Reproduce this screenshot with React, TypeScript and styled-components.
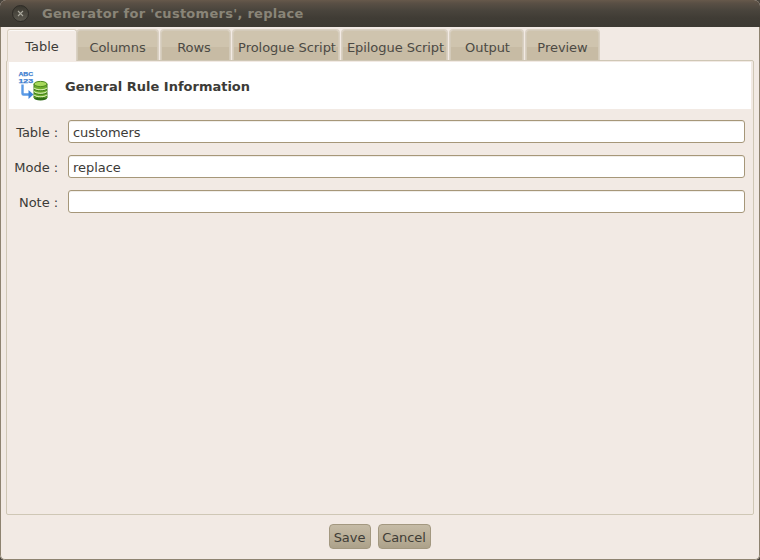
import React from "react";
import styled, { createGlobalStyle } from "styled-components";

const Global = createGlobalStyle`
  html, body { margin: 0; padding: 0; width: 760px; height: 560px; overflow: hidden; background: #4a453d; }
  #root { width: 760px; height: 560px; }
  * { box-sizing: border-box; }
`;

const Win = styled.div`
  width: 760px;
  height: 560px;
  display: flex;
  flex-direction: column;
  background: #f2eae4;
  border-radius: 6px 6px 5px 5px;
  overflow: hidden;
  font-family: "DejaVu Sans", sans-serif;
  font-size: 13px;
  letter-spacing: -0.05px;
  color: #3c3b37;
`;

const TitleBar = styled.div`
  height: 27px;
  flex: none;
  display: flex;
  align-items: center;
  gap: 13px;
  padding: 0 0 1px 12px;
  background: linear-gradient(#67594b 0, #5a5045 3px, #4a453d 10px, #403c35 18px, #3d3a33 100%);
`;

const CloseBtn = styled.div`
  width: 17px;
  height: 17px;
  margin-top: 1px;
  border-radius: 50%;
  display: flex;
  align-items: center;
  justify-content: center;
  background: linear-gradient(#3a372f, #5c5950);
  border: 1px solid #2d2b26;
`;

const Title = styled.div`
  font-weight: 700;
  font-size: 13px;
  letter-spacing: 0.27px;
  color: #8a8578;
`;

const Body = styled.div`
  flex: 1;
  display: flex;
  flex-direction: column;
  padding: 2px 6px 0 5px;
  border-left: 1px solid #8e8370;
  border-right: 1px solid #8e8370;
  border-bottom: 1px solid #8e8370;
  border-radius: 0 0 5px 5px;
`;

const TabStrip = styled.div`
  display: flex;
  align-items: flex-end;
  gap: 3px;
  height: 31px;
  flex: none;
  padding-left: 1px;
  position: relative;
  z-index: 1;
`;

const Tab = styled.div<{ $w: number; $active?: boolean; $shift?: number }>`
  width: ${(p) => p.$w}px;
  flex: none;
  height: ${(p) => (p.$active ? 32 : 30)}px;
  margin-bottom: ${(p) => (p.$active ? -1 : 0)}px;
  margin-right: ${(p) => (p.$active ? -3 : 0)}px;
  display: flex;
  align-items: center;
  justify-content: center;
  padding-top: ${(p) => (p.$active ? 2 : 4)}px;
  padding-left: ${(p) => Math.max(p.$shift ?? 0, 0)}px;
  padding-right: ${(p) => Math.max(-(p.$shift ?? 0), 0)}px;
  border-radius: 3px 3px 0 0;
  border: 1px solid ${(p) => (p.$active ? "#d8cfc0" : "#d3cab9")};
  border-bottom: none;
  box-shadow: ${(p) => (p.$active ? "inset 0 1px 0 #fbf8f5" : "0 0 0 1px #dad1c3")};
  clip-path: ${(p) => (p.$active ? "none" : "inset(-1px -1px 0 -1px)")};
  background: ${(p) =>
    p.$active
      ? "#f2eae4"
      : "linear-gradient(#cfc4ae 0, #cfc4ae 55%, #c7bba4 55%, #c7bba4 100%)"};
  color: ${(p) => (p.$active ? "#3c3b37" : "#4c4a44")};
  font-size: 13px;
  white-space: nowrap;
`;

const Panel = styled.div`
  flex: 1;
  display: flex;
  flex-direction: column;
  margin-right: -1px;
  border: 1px solid #cfc7b5;
  border-radius: 2px;
  padding: 1px 2px 0;
`;

const Banner = styled.div`
  height: 47px;
  flex: none;
  display: flex;
  align-items: center;
  gap: 15px;
  padding: 0 0 0 9px;
  background: #fff;
  margin-bottom: 11px;
`;

const BannerTitle = styled.div`
  font-weight: 700;
  font-size: 13px;
  letter-spacing: 0;
  padding-top: 2px;
  color: #3c3b37;
`;

const Form = styled.div`
  display: flex;
  flex-direction: column;
  gap: 12px;
`;

const Row = styled.div`
  display: flex;
  align-items: center;
  padding-right: 6px;
`;

const Label = styled.div`
  width: 49px;
  flex: none;
  text-align: right;
  white-space: nowrap;
  margin-right: 10px;
  padding-top: 2px;
`;

const Field = styled.div`
  flex: 1;
  height: 23px;
  display: flex;
  align-items: center;
  padding: 2px 4px 0;
  background: #fff;
  border: 1px solid #a69779;
  border-radius: 3px;
  box-shadow: inset 0 1px 0 #f1eeea;
  color: #3c3b37;
`;

const Footer = styled.div`
  height: 44px;
  flex: none;
  display: flex;
  justify-content: center;
  align-items: flex-start;
  gap: 7px;
  padding-top: 9px;
`;

const Button = styled.div<{ $w: number }>`
  width: ${(p) => p.$w}px;
  height: 25px;
  display: flex;
  align-items: center;
  justify-content: center;
  padding-top: 1px;
  border: 1px solid #a39880;
  border-radius: 4px;
  background: linear-gradient(#c5bba6, #b9ae97 55%, #aca18a);
  color: #3f3d37;
`;

const tabs: [string, number, number][] = [
  ["Columns", 81, 0],
  ["Rows", 69, -3],
  ["Prologue Script", 106, 2],
  ["Epilogue Script", 105, 2],
  ["Output", 73, 2],
  ["Preview", 73, 0],
];

const Icon = () => (
  <svg width="32" height="33" viewBox="0 0 32 33" style={{ flex: "none" }}>
    <text x="0.5" y="6.5" fontFamily="'Liberation Sans', sans-serif" fontWeight="700" fontSize="6.2" fill="#3f7fd0" stroke="#3f7fd0" strokeWidth="0.25" textLength="14.5" lengthAdjust="spacingAndGlyphs">ABC</text>
    <text x="0.5" y="14" fontFamily="'Liberation Sans', sans-serif" fontWeight="700" fontSize="6.2" fill="#3f7fd0" stroke="#3f7fd0" strokeWidth="0.25" textLength="14.5" lengthAdjust="spacingAndGlyphs">123</text>
    <path d="M4.5 15.5v9a1 1 0 0 0 1 1H11" fill="none" stroke="#5a9ae6" strokeWidth="2.4" />
    <path d="M10.5 21l5 4.5-5 4.5z" fill="#3f85db" />
    <ellipse cx="22.5" cy="29" rx="6.6" ry="2.6" fill="#2f6d16" />
    <rect x="16" y="15" width="13" height="14" fill="#6fae2c" />
    <path d="M16 15v14M29 15v14" stroke="#3f7d1c" />
    <ellipse cx="22.5" cy="15" rx="6.5" ry="2.6" fill="#a6d85a" stroke="#4e8a1f" />
    <path d="M16 19c2 2.5 11 2.5 13 0M16 22.5c2 2.5 11 2.5 13 0M16 26c2 2.5 11 2.5 13 0" fill="none" stroke="#d4eeaa" strokeWidth="1.3" />
    <path d="M16 20c2 2.5 11 2.5 13 0M16 23.5c2 2.5 11 2.5 13 0M16 27c2 2.5 11 2.5 13 0" fill="none" stroke="#3c7a18" />
  </svg>
);

export default function App() {
  return (
    <>
      <Global />
      <Win>
        <TitleBar>
          <CloseBtn>
            <svg width="7" height="7" viewBox="0 0 7 7">
              <path d="M1 1l5 5M6 1l-5 5" stroke="#a9a79c" strokeWidth="1.1" />
            </svg>
          </CloseBtn>
          <Title>Generator for 'customers', replace</Title>
        </TitleBar>
        <Body>
          <TabStrip>
            <Tab $w={70} $active>Table</Tab>
            {tabs.map(([t, w, s]) => (
              <Tab key={t} $w={w} $shift={s}>{t}</Tab>
            ))}
          </TabStrip>
          <Panel>
            <Banner>
              <Icon />
              <BannerTitle>General Rule Information</BannerTitle>
            </Banner>
            <Form>
              <Row><Label>Table :</Label><Field>customers</Field></Row>
              <Row><Label>Mode :</Label><Field>replace</Field></Row>
              <Row><Label>Note :</Label><Field /></Row>
            </Form>
          </Panel>
          <Footer>
            <Button $w={42}>Save</Button>
            <Button $w={53}>Cancel</Button>
          </Footer>
        </Body>
      </Win>
    </>
  );
}
